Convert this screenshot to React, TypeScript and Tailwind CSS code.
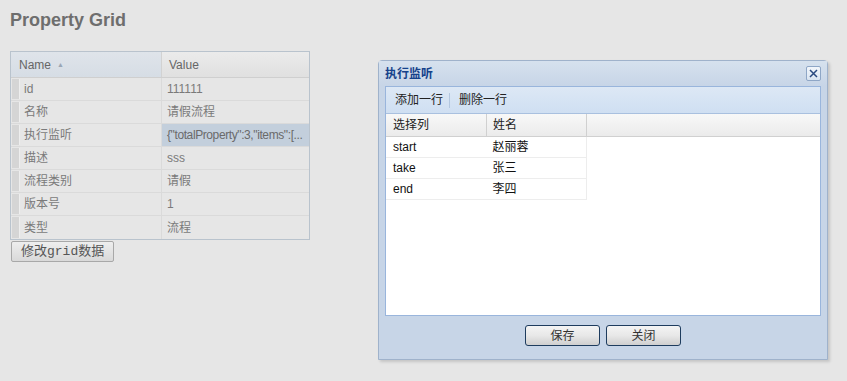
import React from "react";

const FONT = '"Liberation Sans", "Noto Sans CJK SC", sans-serif';

const props = [
  { name: "id", value: "111111" },
  { name: "名称", value: "请假流程" },
  { name: "执行监听", value: '{"totalProperty":3,"items":[...', selected: true },
  { name: "描述", value: "sss" },
  { name: "流程类别", value: "请假" },
  { name: "版本号", value: "1" },
  { name: "类型", value: "流程" },
];

const listeners = [
  { col: "start", name: "赵丽蓉" },
  { col: "take", name: "张三" },
  { col: "end", name: "李四" },
];

function PropertyGrid() {
  return (
    <div className="w-[300px] border border-[#b9c3cd] bg-[#e6e6e6]">
      {/* header */}
      <div className="flex h-[26px] border-b border-[#cfcfcf] text-[12px] text-[#666]">
        <div className="w-[151px] flex items-center gap-1.5 pl-[8px] bg-gradient-to-b from-[#dfe4ea] to-[#d6dde5] border-r border-[#d2d2d2]">
          Name
          <span className="text-[7px] text-[#9aa6b4] pt-[1px]">▲</span>
        </div>
        <div className="flex-1 flex items-center pl-[7px] bg-gradient-to-b from-[#ebebeb] to-[#e0e0e0]">Value</div>
      </div>
      {props.map((p) => (
        <div key={p.name} className="flex h-[23px] border-b border-[#dadada] last:border-b-0 text-[12px] text-[#7a7a7a]">
          <div className="w-[151px] flex items-stretch border-r border-[#dadada]">
            <div className="w-[8px] my-[1px] ml-[1px] bg-[#d5d5d5] border-r border-[#eeeeee]" />
            <div className="flex items-center pl-[4px]">{p.name}</div>
          </div>
          <div
            className={
              "flex-1 min-w-0 flex items-center pl-[5px] whitespace-nowrap overflow-hidden " +
              (p.selected ? "bg-[#c3cfdc] text-[#6a6a6a] tracking-[-0.4px]" : "")
            }
          >
            {p.value}
          </div>
        </div>
      ))}
    </div>
  );
}

function DialogButton({ label }: { label: string }) {
  return (
    <button className="w-[75px] h-[21px] rounded-[3px] border border-[#1e3c5e] bg-gradient-to-b from-[#f4f4f4] via-[#e8e8e8] to-[#cfcfcf] text-[12px] text-[#333] flex items-center justify-center">
      {label}
    </button>
  );
}

function ListenerWindow() {
  return (
    <div className="absolute left-[378px] top-[60px] w-[450px] h-[300px] rounded-t-[4px] border border-[#9fb2cb] bg-[#c7d5e7] shadow-[2px_2px_3px_rgba(0,0,0,0.15)] flex flex-col px-[6px]">
      {/* title bar */}
      <div className="h-[25px] flex items-center justify-between -mx-[6px] px-[6px] bg-gradient-to-b from-[#d6e1ee] to-[#c7d5e7]">
        <span className="text-[12px] font-bold text-[#15428b]">执行监听</span>
        <button className="w-[15px] h-[15px] -mt-[1px] rounded-[2px] border border-[#8ea6c6] bg-gradient-to-b from-[#f2f6fb] to-[#d9e4f1] flex items-center justify-center">
          <svg width="9" height="9" viewBox="0 0 9 9">
            <path d="M1 1 L8 8 M8 1 L1 8" stroke="#2a4a80" strokeWidth="1.5" />
          </svg>
        </button>
      </div>
      {/* inner panel */}
      <div className="h-[230px] border border-[#99b5dc] bg-white flex flex-col">
        {/* toolbar */}
        <div className="h-[27px] shrink-0 flex items-center pl-[9px] text-[12px] text-[#222] bg-gradient-to-b from-[#dde8f5] to-[#cfdff2] border-b border-[#a9c0df]">
          <span>添加一行</span>
          <span className="ml-[6px] mr-[9px] w-px h-[15px] bg-[#b3c7e0]" />
          <span>删除一行</span>
        </div>
        {/* grid header */}
        <div className="flex h-[23px] shrink-0 text-[12px] text-[#222] bg-gradient-to-b from-[#f8f8f8] to-[#ebebeb] border-b border-[#d0d0d0]">
          <div className="w-[101px] flex items-center pl-[7px] border-r border-[#d0d0d0]">选择列</div>
          <div className="w-[100px] flex items-center pl-[6px] border-r border-[#d0d0d0]">姓名</div>
          <div className="flex-1" />
        </div>
        {listeners.map((r) => (
          <div key={r.col} className="flex w-[201px] h-[21px] shrink-0 border-b border-[#ededed] border-r text-[12px] text-[#111]">
            <div className="w-[101px] flex items-center pl-[7px]">{r.col}</div>
            <div className="w-[100px] flex items-center pl-[6px]">{r.name}</div>
          </div>
        ))}
      </div>
      {/* buttons */}
      <div className="flex justify-center gap-[6px] pt-[9px]">
        <DialogButton label="保存" />
        <DialogButton label="关闭" />
      </div>
    </div>
  );
}

export default function App() {
  return (
    <div className="relative w-[847px] h-[381px] bg-[#e6e6e6] overflow-hidden" style={{ fontFamily: FONT }}>
      <div className="flex flex-col items-start pl-[10px] pt-[8px]">
        <h1 className="text-[18px] leading-[24px] font-bold text-[#6e6e6e]">Property Grid</h1>
        <div className="mt-[19px]">
          <PropertyGrid />
        </div>
        <button
          className="mt-[1px] ml-[1px] h-[21px] px-[9px] border border-[#a8a8a8] rounded-[2px] bg-gradient-to-b from-[#eeeeee] to-[#d9d9d9] text-[13px] text-[#555] leading-none"
          style={{ fontFamily: '"Liberation Mono", "Noto Sans CJK SC", monospace' }}
        >
          修改grid数据
        </button>
      </div>
      <ListenerWindow />
    </div>
  );
}
